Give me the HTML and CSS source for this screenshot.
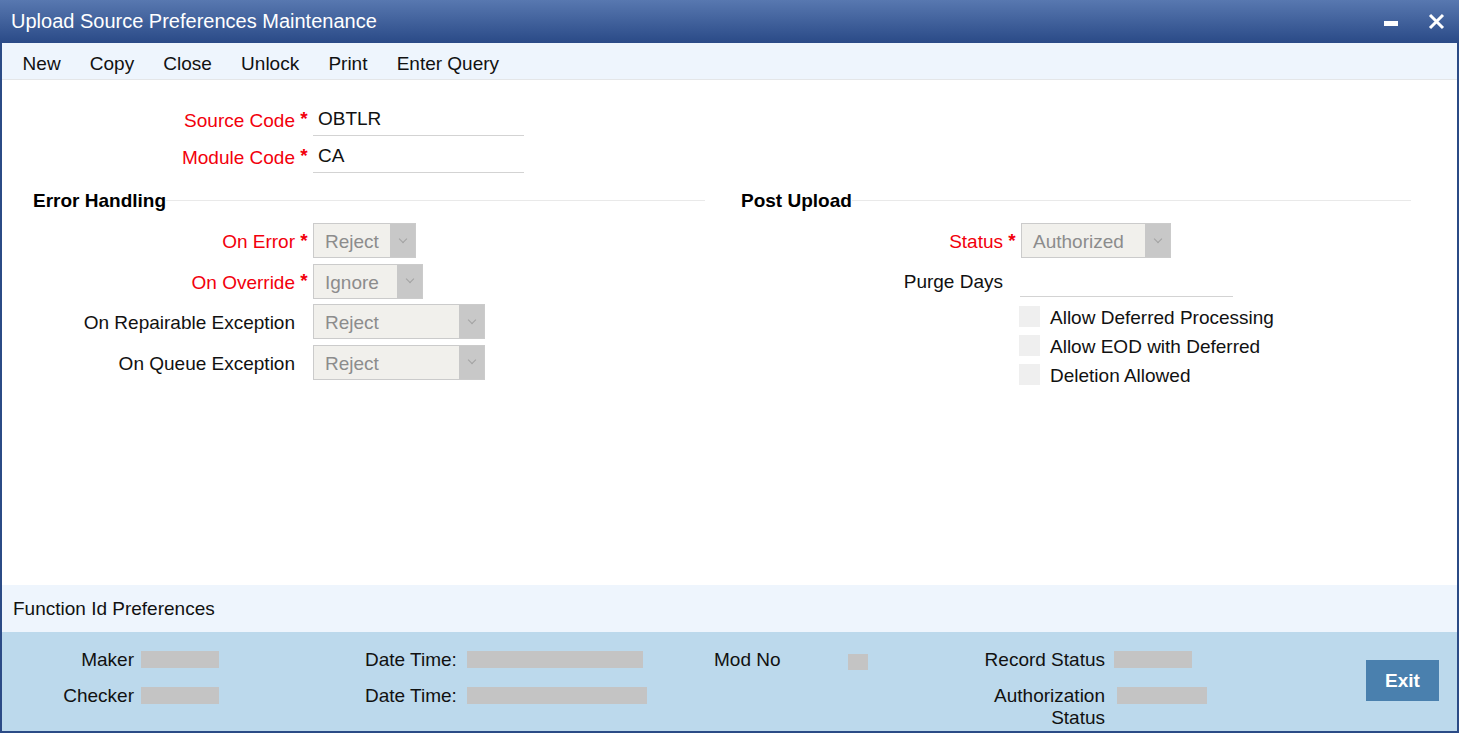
FILE: index.html
```html
<!DOCTYPE html>
<html lang="en">
<head>
    <meta charset="UTF-8">
    <title>Upload Source Preferences Maintenance</title>
    <link rel="stylesheet" href="styles.css">
</head>
<body>
<div class="window">
    <header class="titlebar">
        <h1>Upload Source Preferences Maintenance</h1>
        <div class="win-actions">
            <span class="win-min"></span>
            <svg class="win-close" width="17" height="17" viewBox="0 0 17 17">
                <path d="M2 2 L15 15 M15 2 L2 15" stroke="#fff" stroke-width="3" fill="none"/>
            </svg>
        </div>
    </header>

    <nav class="toolbar">
        <a>New</a>
        <a>Copy</a>
        <a>Close</a>
        <a>Unlock</a>
        <a>Print</a>
        <a>Enter Query</a>
    </nav>

    <main class="content">
        <div class="group">
            <div class="row text-row">
                <label class="req">Source Code</label><span class="star">*</span>
                <div class="text-input">OBTLR</div>
            </div>
            <div class="row text-row">
                <label class="req">Module Code</label><span class="star">*</span>
                <div class="text-input">CA</div>
            </div>
        </div>

        <div class="sections">
            <section class="group">
                <h3 class="legend">Error Handling</h3>
                <div class="row sel-row">
                    <label class="req">On Error</label><span class="star">*</span>
                    <div class="select w-103"><span>Reject</span><i class="arrow"></i></div>
                </div>
                <div class="row sel-row">
                    <label class="req">On Override</label><span class="star">*</span>
                    <div class="select w-110"><span>Ignore</span><i class="arrow"></i></div>
                </div>
                <div class="row sel-row">
                    <label>On Repairable Exception</label><span class="star"></span>
                    <div class="select w-172"><span>Reject</span><i class="arrow"></i></div>
                </div>
                <div class="row sel-row">
                    <label>On Queue Exception</label><span class="star"></span>
                    <div class="select w-172"><span>Reject</span><i class="arrow"></i></div>
                </div>
            </section>

            <section class="group right">
                <h3 class="legend">Post Upload</h3>
                <div class="row sel-row">
                    <label class="req">Status</label><span class="star">*</span>
                    <div class="select w-150"><span>Authorized</span><i class="arrow"></i></div>
                </div>
                <div class="row purge-row">
                    <label>Purge Days</label><span class="star"></span>
                    <div class="text-input purge"></div>
                </div>
                <div class="row check-row">
                    <span></span><span class="star"></span>
                    <div class="check"><i class="box"></i><span>Allow Deferred Processing</span></div>
                </div>
                <div class="row check-row">
                    <span></span><span class="star"></span>
                    <div class="check"><i class="box"></i><span>Allow EOD with Deferred</span></div>
                </div>
                <div class="row check-row">
                    <span></span><span class="star"></span>
                    <div class="check"><i class="box"></i><span>Deletion Allowed</span></div>
                </div>
            </section>
        </div>
    </main>

    <div class="fn-bar">Function Id Preferences</div>

    <footer class="audit">
        <div class="audit-col col-maker">
            <span class="lbl">Maker</span><span class="val w-78"></span>
            <span class="lbl">Checker</span><span class="val w-78"></span>
        </div>
        <div class="audit-col col-date">
            <span class="lbl">Date Time:</span><span class="val w-176"></span>
            <span class="lbl">Date Time:</span><span class="val w-180"></span>
        </div>
        <div class="audit-col col-mod">
            <span class="lbl">Mod No</span><span class="val mod"></span>
        </div>
        <div class="audit-col col-status">
            <span class="lbl">Record Status</span><span class="val w-78"></span>
            <span class="lbl">Authorization<br>Status</span><span class="val w-90"></span>
        </div>
        <button class="exit-btn">Exit</button>
    </footer>
</div>
</body>
</html>
```

FILE: styles.css
```css
body {
    margin: 0;
    background: #fff;
    font-family: "Liberation Sans", Arial, sans-serif;
    font-size: 19px;
    color: #111;
}
.window {
    width: 1459px;
    height: 733px;
    box-sizing: border-box;
    border: 2px solid #2b4b86;
    border-top: none;
    display: flex;
    flex-direction: column;
}

/* title bar */
.titlebar {
    height: 43px;
    margin: 0 -2px;
    padding: 0 14px 0 11px;
    background: linear-gradient(#5878b0, #2a4a87);
    display: flex;
    align-items: center;
    justify-content: space-between;
    color: #fff;
}
.titlebar h1 {
    margin: 0;
    font-size: 20px;
    font-weight: normal;
}
.win-actions {
    display: flex;
    align-items: center;
    gap: 30px;
}
.win-min {
    width: 14px;
    height: 5px;
    background: #fff;
    margin-top: 3px;
}

/* toolbar */
.toolbar {
    height: 36px;
    box-sizing: border-box;
    padding: 5px 0 0 6px;
    background: #eef5fd;
    border-bottom: 1px solid #e4e6e8;
    display: flex;
    align-items: center;
}
.toolbar {
    height: 37px;
}
.toolbar a {
    padding: 0 14.6px;
    color: #111;
    cursor: pointer;
}

/* form */
.content {
    flex: 1;
    padding: 20px 0 0 31px;
}
.group {
    width: 672px;
}
.group.right {
    width: 670px;
}
.sections {
    display: flex;
    gap: 36px;
    margin-top: 13px;
}
.legend {
    margin: 0 0 7px;
    height: 30px;
    display: flex;
    align-items: center;
    font-size: 19px;
    font-weight: bold;
    color: #000;
}
.legend::after {
    content: "";
    flex: 1;
    height: 1px;
    margin-top: -1px;
    background: #e9e9e9;
}
.row {
    display: grid;
    grid-template-columns: 262px 18px auto;
    align-items: center;
}
.row label {
    text-align: right;
    white-space: nowrap;
    padding-top: 3px;
}
.row label.req {
    color: #f2000c;
}
.star {
    color: #f2000c;
    font-weight: bold;
    text-align: center;
    position: relative;
    top: 0;
}
.text-row {
    height: 36px;
    margin-bottom: 1px;
}
.text-row label {
    padding-top: 5px;
}
.text-row .star {
    top: 1px;
}
.text-input {
    width: 211px;
    height: 36px;
    box-sizing: border-box;
    padding: 3px 5px 0;
    border-bottom: 1px solid #d3d3d3;
    display: flex;
    align-items: center;
}
.sel-row {
    height: 35px;
    margin-bottom: 5.5px;
}
.select {
    height: 35px;
    box-sizing: border-box;
    border: 1px solid #cbcbcb;
    background: #f1f0ec;
    color: #8c8c8c;
    display: flex;
    align-items: center;
}
.select span {
    flex: 1;
    padding: 3px 0 0 11px;
}
.select .arrow {
    width: 25px;
    align-self: stretch;
    background: #c8c8c8;
    display: flex;
    align-items: center;
    justify-content: center;
}
.select .arrow::before {
    content: "";
    width: 5px;
    height: 5px;
    border-right: 1px solid #a2a2a2;
    border-bottom: 1px solid #a2a2a2;
    transform: rotate(45deg);
    margin-top: -4px;
}
.w-103 { width: 103px; }
.w-110 { width: 110px; }
.w-150 { width: 150px; }
.w-172 { width: 172px; }

.purge-row {
    height: 33px;
    margin-bottom: 7.5px;
}
.text-input.purge {
    height: 33px;
    width: 213px;
    margin-left: -1px;
}
.check-row {
    height: 21px;
    margin-bottom: 8px;
}
.check {
    display: flex;
    align-items: center;
    gap: 10px;
    margin-left: -2px;
    white-space: nowrap;
}
.check span {
    padding-top: 3px;
}
.check .box {
    width: 21px;
    height: 21px;
    background: #efefef;
}

/* bottom */
.fn-bar {
    height: 47px;
    box-sizing: border-box;
    padding: 1px 0 0 11px;
    background: #eef5fd;
    display: flex;
    align-items: center;
}
.audit {
    height: 99px;
    box-sizing: border-box;
    padding: 17px 18px 0 0;
    background: #bcd9ec;
    display: flex;
    align-items: flex-start;
}
.audit-col {
    display: grid;
    align-items: start;
    row-gap: 14px;
    line-height: 22px;
}
.audit-col .val {
    height: 17px;
    margin-top: 2px;
    background: #c4c4c4;
}
.col-maker {
    grid-template-columns: 132px 78px;
    column-gap: 7px;
}
.col-maker .lbl,
.col-status .lbl {
    text-align: right;
}
.col-date {
    margin-left: 146px;
    grid-template-columns: 92px auto;
    column-gap: 10px;
}
.col-mod {
    margin-left: 67px;
    grid-template-columns: 124px 20px;
    column-gap: 10px;
}
.col-mod .val {
    margin-top: 5px;
    height: 16px;
}
.col-status {
    grid-template-columns: 237px auto;
    column-gap: 9px;
}
.w-78 { width: 78px; }
.w-90 { width: 90px; margin-left: 3px; }
.w-176 { width: 176px; }
.w-180 { width: 180px; }
.exit-btn {
    margin: 11px 0 0 auto;
    width: 73px;
    height: 41px;
    border: none;
    background: #4a80ae;
    color: #fff;
    font-family: inherit;
    font-size: 19px;
    font-weight: bold;
}
```
